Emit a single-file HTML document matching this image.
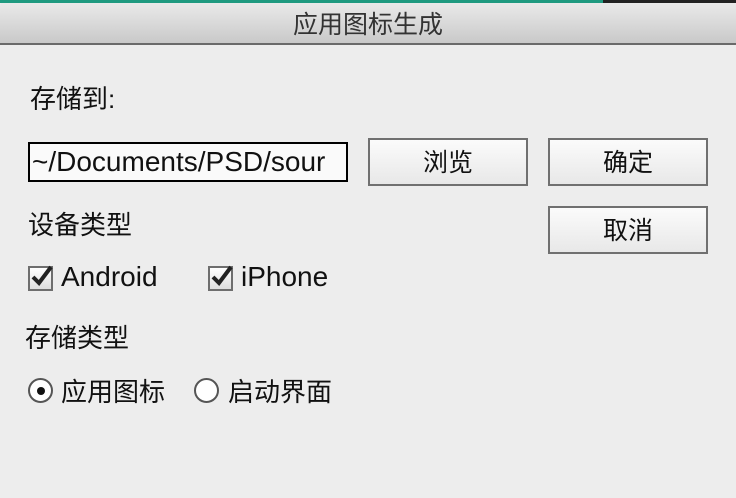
<!DOCTYPE html>
<html><head><meta charset="utf-8"><style>
*{margin:0;padding:0;box-sizing:border-box}
body{width:736px;height:498px;background:#ededed;position:relative;overflow:hidden;font-family:"Liberation Sans","Noto Sans CJK SC",sans-serif;color:#111}
.tb{position:absolute;left:0;top:0;width:736px;height:45px;background:linear-gradient(#ececec,#c9c9c9);border-bottom:2px solid #6a6a6a;border-radius:6px 6px 0 0}
.strip{position:absolute;left:0;top:0;width:603px;height:3px;background:#1f9a80}
.strip2{position:absolute;left:603px;top:0;width:133px;height:3px;background:#222}
.title{position:absolute;left:0;width:736px;top:13px;text-align:center;font-size:25px;line-height:1;color:#333}
.t{position:absolute;font-size:26px;line-height:1;white-space:nowrap}
.inp{position:absolute;left:28px;top:142px;width:320px;height:40px;border:2px solid #000;background:#fafafa;font-size:28px;padding-left:2px;line-height:35px;overflow:hidden;white-space:nowrap}
.btn{position:absolute;width:160px;height:48px;border:2px solid #707070;background:linear-gradient(#fbfbfb,#e8e8e8);font-size:25px;text-align:center;line-height:46px}
.cb{position:absolute;width:25px;height:25px;border:2px solid #6e6e6e;background:linear-gradient(#fff,#ddd)}
.rd{position:absolute;width:25px;height:25px;border:2px solid #555;border-radius:50%;background:#fff}
</style></head><body>
<div class="tb"></div><div class="strip"></div><div class="strip2"></div>
<div class="title">应用图标生成</div>
<div class="t" style="left:30px;top:86px">存储到:</div>
<div class="inp">~/Documents/PSD/sour</div>
<div class="btn" style="left:368px;top:138px">浏览</div>
<div class="btn" style="left:548px;top:138px">确定</div>
<div class="btn" style="left:548px;top:206px">取消</div>
<div class="t" style="left:28px;top:212px">设备类型</div>
<div class="cb" style="left:28px;top:266px"><svg width="24" height="24" style="position:absolute;left:0;top:-4px"><path d="M3 13 L9 19 L21 3" stroke="#222" stroke-width="4" fill="none"/></svg></div>
<div class="t" style="left:61px;top:263px;font-size:28px">Android</div>
<div class="cb" style="left:208px;top:266px"><svg width="24" height="24" style="position:absolute;left:0;top:-4px"><path d="M3 13 L9 19 L21 3" stroke="#222" stroke-width="4" fill="none"/></svg></div>
<div class="t" style="left:241px;top:263px;font-size:28px">iPhone</div>
<div class="t" style="left:25px;top:325px">存储类型</div>
<div class="rd" style="left:28px;top:378px"><div style="position:absolute;left:7px;top:7px;width:8px;height:8px;border-radius:50%;background:#111"></div></div>
<div class="t" style="left:61px;top:379px">应用图标</div>
<div class="rd" style="left:194px;top:378px"></div>
<div class="t" style="left:228px;top:379px">启动界面</div>
</body></html>
